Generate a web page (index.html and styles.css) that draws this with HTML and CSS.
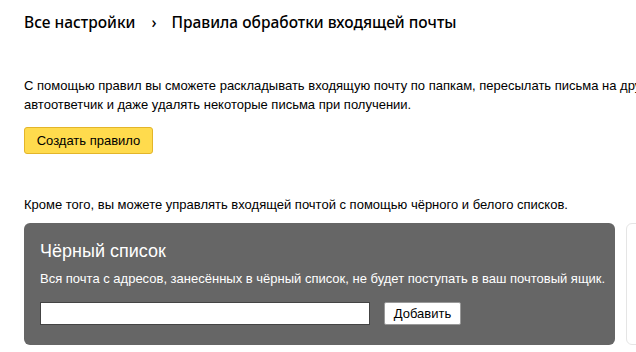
FILE: index.html
```html
<!DOCTYPE html>
<html lang="ru">
<head>
    <meta charset="UTF-8">
    <meta name="viewport" content="width=device-width, initial-scale=1.0">
    <title>Правила обработки входящей почты</title>
    <link rel="stylesheet" href="styles.css">
</head>
<body>
    <div class="page">
        <div class="crumbs">
            <a class="crumb-link" href="#">Все настройки</a>
            <span class="crumb-sep">›</span>
            <span class="crumb-current">Правила обработки входящей почты</span>
        </div>

        <p class="intro">С помощью правил вы сможете раскладывать входящую почту по папкам, пересылать письма на другой адрес, настроить автоответчик и даже удалять некоторые письма при получении.</p>

        <button type="button" class="btn-create">Создать правило</button>

        <p class="lists-note">Кроме того, вы можете управлять входящей почтой с помощью чёрного и белого списков.</p>

        <div class="lists">
            <div class="list-box black">
                <h2>Чёрный список</h2>
                <p>Вся почта с адресов, занесённых в чёрный список, не будет поступать в ваш почтовый ящик.</p>
                <form class="list-form">
                    <input type="text" class="list-input">
                    <button type="button" class="btn-add">Добавить</button>
                </form>
            </div>
            <div class="list-box white"></div>
        </div>
    </div>
</body>
</html>
```

FILE: styles.css
```css
body {
    margin: 0;
    overflow: hidden;
    background: #fff;
    color: #000;
    font-family: "Liberation Sans", Arial, sans-serif;
}
.page {
    width: 900px;
    padding: 12px 0 0 24px;
}
.crumbs {
    display: flex;
    align-items: center;
    font-family: "Noto Sans", "Open Sans", sans-serif;
    font-size: 15.5px;
    font-weight: 500;
    line-height: 20px;
    color: #000;
}
.crumb-link {
    color: #000;
    text-decoration: none;
}
.crumb-sep {
    margin: 0 15px 0 16px;
}
.intro {
    width: 790px;
    margin: 44px 0 0;
    font-size: 13px;
    line-height: 19px;
}
.btn-create {
    margin-top: 13px;
    height: 27px;
    width: 129px;
    padding: 0;
    background: #ffdb4d;
    border: 1px solid #e3b52a;
    border-radius: 3px;
    font-family: "Liberation Sans", Arial, sans-serif;
    font-size: 13px;
    color: #000;
}
.lists-note {
    margin: 41px 0 0;
    font-size: 13px;
    line-height: 19px;
}
.lists {
    display: flex;
    gap: 11px;
    margin-top: 9px;
}
.list-box {
    border-radius: 6px;
    height: 122px;
    box-sizing: border-box;
}
.black {
    width: 596px;
    background: #666;
    color: #fff;
    padding: 17px 2px 0 16px;
}
.white {
    width: 300px;
    border: 1px solid #e5e5e5;
}
.black h2 {
    margin: 0;
    font-family: "Liberation Sans", Arial, sans-serif;
    font-weight: normal;
    font-size: 18px;
    line-height: 22px;
}
.black p {
    margin: 8px 0 0;
    font-size: 13px;
    line-height: 18px;
    white-space: nowrap;
}
.list-form {
    display: flex;
    gap: 14px;
    margin-top: 14px;
}
.list-input {
    width: 330px;
    height: 23px;
    box-sizing: border-box;
    margin: 0;
    border: 1px solid #444;
    background: #fff;
    padding: 0 4px;
}
.btn-add {
    width: 77px;
    height: 23px;
    padding: 0;
    background: #fff;
    border: 1px solid #999;
    border-radius: 2px;
    font-family: "Liberation Sans", Arial, sans-serif;
    font-size: 13px;
    color: #000;
}
```
